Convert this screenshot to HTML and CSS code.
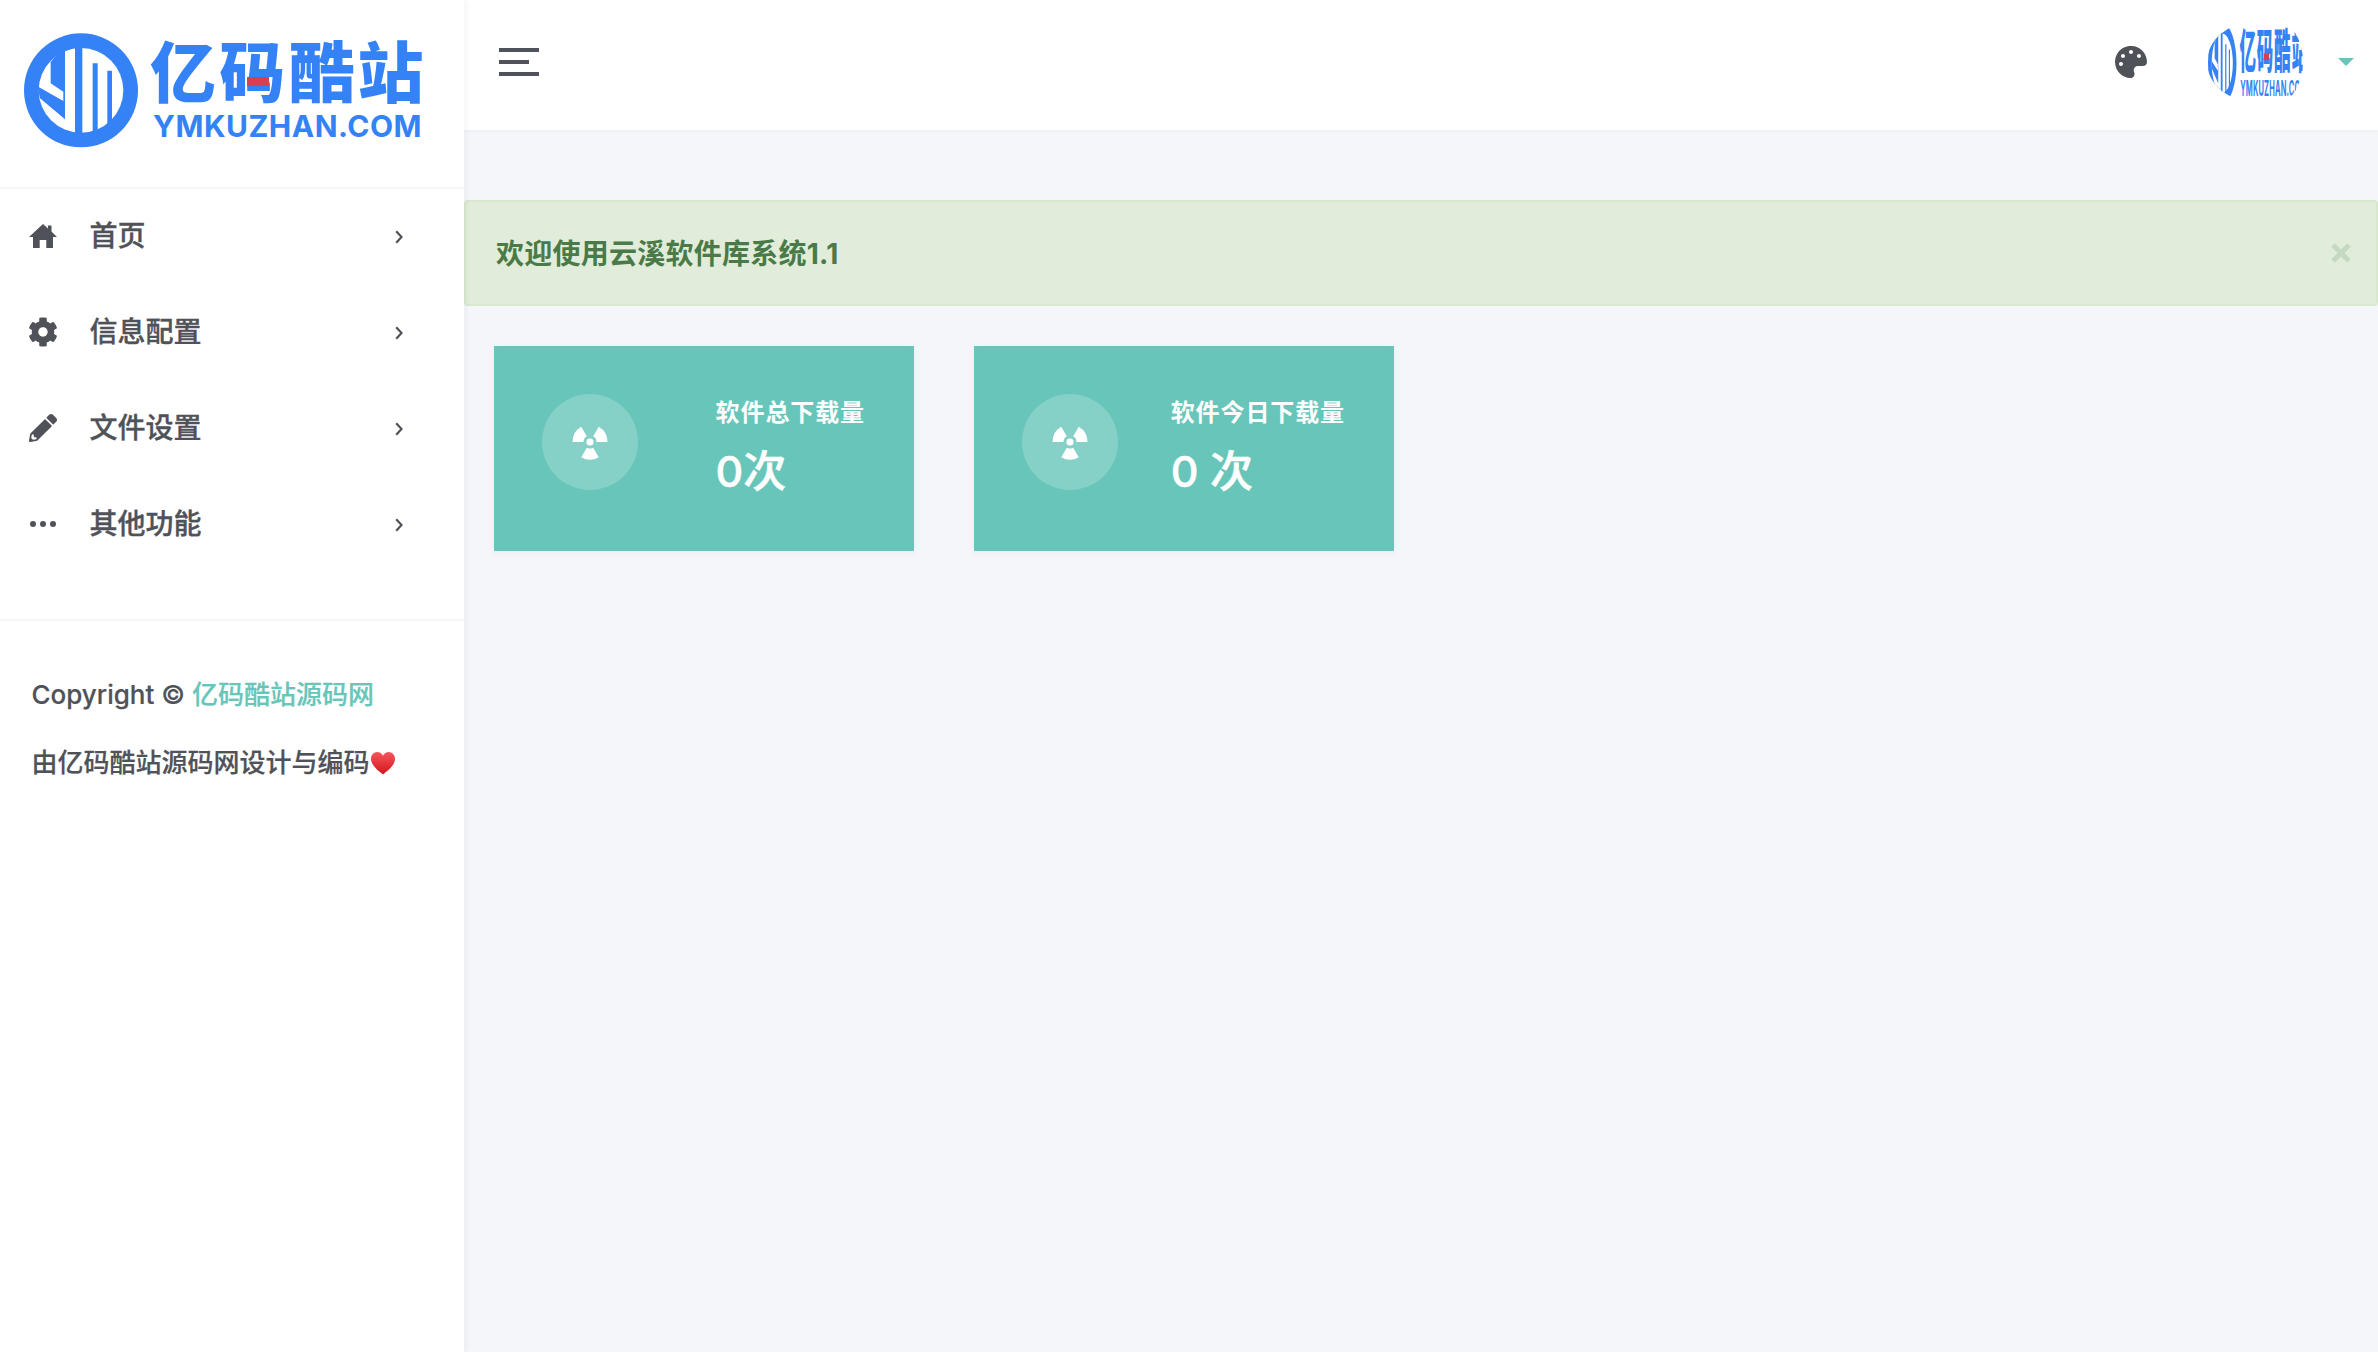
FILE: index.html
```html
<!DOCTYPE html>
<html lang="zh-CN">
<head>
<meta charset="utf-8">
<title>亿码酷站</title>
<link rel="stylesheet" href="styles.css">
</head>
<body>
<svg class="defs" width="0" height="0" aria-hidden="true">
  <defs>
    <linearGradient id="heart-fill" x1="0" y1="0" x2="0" y2="1">
      <stop offset="0" stop-color="#f4585c"/>
      <stop offset="1" stop-color="#d5141c"/>
    </linearGradient>
  </defs>
  <symbol id="logo-mark" viewBox="0 0 375 366">
    <circle cx="183" cy="181" r="171" fill="#3482f6"/>
    <circle cx="183" cy="181" r="127" fill="#fff"/>
    <path fill="#3482f6" d="M165 40h22v282h-22zM218 100h15v210h-15zM262 122h14v170h-14zM92 95l43-45v218L60 205l-8-36 78 44v-28l-38-25z"/>
  </symbol>
  <symbol id="radiation" viewBox="-18 -18 36 36">
    <circle r="3.6" fill="#fff"/>
    <path fill="#fff" d="M-3.25 5.63L-8.75 15.16A17.5 17.5 0 0 0 8.75 15.16L3.25 5.63A6.5 6.5 0 0 1-3.25 5.63Z"/>
    <path fill="#fff" transform="rotate(120)" d="M-3.25 5.63L-8.75 15.16A17.5 17.5 0 0 0 8.75 15.16L3.25 5.63A6.5 6.5 0 0 1-3.25 5.63Z"/>
    <path fill="#fff" transform="rotate(240)" d="M-3.25 5.63L-8.75 15.16A17.5 17.5 0 0 0 8.75 15.16L3.25 5.63A6.5 6.5 0 0 1-3.25 5.63Z"/>
  </symbol>
  <symbol id="chevron" viewBox="0 0 8 14">
    <path d="M1.2 1.2L6.6 7l-5.4 5.8" fill="none" stroke="currentColor" stroke-width="2.200"/>
  </symbol>
</svg>
<div class="app">
  <aside class="sidebar">
    <div class="brand">
      <div class="logo">
        <svg class="logo-mark"><use href="#logo-mark"/></svg>
        <div class="logo-text">
          <div class="logo-cn">亿<span class="logo-red">码</span>酷站</div>
          <div class="logo-en">YMKUZHAN.COM</div>
        </div>
      </div>
    </div>
    <nav class="nav">
      <a class="nav-item">
        <svg class="nav-icon" viewBox="0 0 28 28"><path d="M14 2L19 6.400V3.500h3.500v6L28 15h-4v11h-6.700v-8h-6.600v8H4V15H0z"/></svg>
        <span class="nav-label">首页</span>
        <svg class="nav-chevron"><use href="#chevron"/></svg>
      </a>
      <a class="nav-item">
        <svg class="nav-icon nav-icon-cog" viewBox="0 0 512 512"><path d="M487.4 315.7l-42.6-24.6c4.3-23.2 4.3-47 0-70.2l42.6-24.6c4.9-2.8 7.1-8.6 5.5-14-11.1-35.6-30-67.8-54.7-94.6-3.8-4.1-10-5.1-14.8-2.3L380.8 110c-17.9-15.4-38.5-27.3-60.8-35.1V25.8c0-5.6-3.9-10.5-9.4-11.7-36.7-8.2-74.3-7.8-109.2 0-5.5 1.2-9.4 6.1-9.4 11.7V75c-22.2 7.9-42.8 19.8-60.8 35.1L88.7 85.5c-4.9-2.8-11-1.9-14.8 2.3-24.7 26.7-43.6 58.9-54.7 94.6-1.7 5.4.6 11.2 5.5 14L67.3 221c-4.3 23.2-4.3 47 0 70.2l-42.6 24.6c-4.9 2.8-7.1 8.6-5.5 14 11.1 35.6 30 67.8 54.7 94.6 3.8 4.1 10 5.1 14.8 2.3l42.6-24.6c17.9 15.4 38.5 27.3 60.8 35.1v49.2c0 5.6 3.9 10.5 9.4 11.7 36.7 8.2 74.3 7.8 109.2 0 5.5-1.2 9.4-6.1 9.4-11.7v-49.2c22.2-7.9 42.8-19.8 60.8-35.1l42.6 24.6c4.9 2.8 11 1.9 14.8-2.3 24.7-26.7 43.6-58.9 54.7-94.6 1.5-5.5-.7-11.3-5.6-14.1zM256 336c-44.1 0-80-35.9-80-80s35.9-80 80-80 80 35.9 80 80-35.9 80-80 80z"/></svg>
        <span class="nav-label">信息配置</span>
        <svg class="nav-chevron"><use href="#chevron"/></svg>
      </a>
      <a class="nav-item">
        <svg class="nav-icon" viewBox="0 0 512 512"><path d="M497.9 142.1l-46.1 46.1c-4.7 4.7-12.3 4.7-17 0l-111-111c-4.7-4.7-4.7-12.3 0-17l46.1-46.1c18.7-18.7 49.1-18.7 67.9 0l60.1 60.1c18.8 18.7 18.8 49.1 0 67.9zM284.2 99.8L21.6 362.4.4 483.9c-2.9 16.4 11.4 30.6 27.8 27.8l121.5-21.3 262.6-262.600c4.7-4.7 4.7-12.3 0-17l-111-111c-4.8-4.7-12.4-4.7-17.1 0zM88 424h48v36.3l-64.5 11.3-31.1-31.1L51.7 376H88v48z"/></svg>
        <span class="nav-label">文件设置</span>
        <svg class="nav-chevron"><use href="#chevron"/></svg>
      </a>
      <a class="nav-item">
        <svg class="nav-icon" viewBox="0 0 28 28"><circle cx="4" cy="14" r="3"/><circle cx="14" cy="14" r="3"/><circle cx="24" cy="14" r="3"/></svg>
        <span class="nav-label">其他功能</span>
        <svg class="nav-chevron"><use href="#chevron"/></svg>
      </a>
    </nav>
    <footer class="side-footer">
      <p class="side-line">Copyright © <a class="side-link">亿码酷站源码网</a></p>
      <p class="side-line">由亿码酷站源码网设计与编码<svg class="heart" viewBox="0 0 26 24"><path fill="url(#heart-fill)" d="M13 23.500C9 20 1 14.600 1 7.800 1 3.800 4 1 7.300 1 9.800 1 12 2.400 13 4.800 14 2.400 16.200 1 18.700 1 22 1 25 3.800 25 7.800 25 14.600 17 20 13 23.500Z"/></svg></p>
    </footer>
  </aside>
  <div class="main">
    <header class="topbar">
      <div class="burger"><span class="burger-line"></span><span class="burger-line burger-short"></span><span class="burger-line"></span></div>
      <div class="top-right">
        <svg class="palette" viewBox="0 0 512 512"><path d="M204.3 5C104.9 24.4 24.8 104.3 5.2 203.4c-37 187 131.7 326.4 258.8 306.7 41.2-6.4 61.4-54.6 42.5-91.7-23.1-45.4 9.9-98.4 60.9-98.4h79.7c35.8 0 64.8-29.6 64.9-65.3C511.5 97.1 368.1-26.900 204.3 5zM96 320c-17.700 0-32-14.300-32-32s14.300-32 32-32 32 14.300 32 32-14.300 32-32 32zm32-128c-17.700 0-32-14.300-32-32s14.300-32 32-32 32 14.300 32 32-14.300 32-32 32zm128-64c-17.700 0-32-14.300-32-32s14.300-32 32-32 32 14.300 32 32-14.300 32-32 32zm128 64c-17.700 0-32-14.300-32-32s14.300-32 32-32 32 14.300 32 32-14.300 32-32 32z"/></svg>
        <div class="avatar">
          <div class="logo logo-small">
            <svg class="logo-mark"><use href="#logo-mark"/></svg>
            <div class="logo-text">
              <div class="logo-cn">亿<span class="logo-red">码</span>酷站</div>
              <div class="logo-en">YMKUZHAN.COM</div>
            </div>
          </div>
        </div>
        <span class="caret"></span>
      </div>
    </header>
    <main class="content">
      <div class="alert">
        <span class="alert-text">欢迎使用云溪软件库系统1.1</span>
        <svg class="alert-close" viewBox="0 0 22 22"><path d="M3 3l16 16M19 3L3 19" stroke="currentColor" stroke-width="5" fill="none"/></svg>
      </div>
      <div class="cards">
        <div class="card">
          <div class="card-icon"><svg class="card-glyph"><use href="#radiation"/></svg></div>
          <div class="card-body">
            <div class="card-title">软件总下载量</div>
            <div class="card-value">0次</div>
          </div>
        </div>
        <div class="card">
          <div class="card-icon"><svg class="card-glyph"><use href="#radiation"/></svg></div>
          <div class="card-body">
            <div class="card-title">软件今日下载量</div>
            <div class="card-value">0 次</div>
          </div>
        </div>
      </div>
    </main>
  </div>
</div>
</body>
</html>
```

FILE: styles.css
```css
* { box-sizing: border-box; }
html, body { margin: 0; height: 100%; overflow: hidden; }
body {
  font-family: Inter, "Noto Sans CJK SC", sans-serif;
  color: #4f5259;
  background: #f4f6fa;
}
.defs { position: absolute; }
.app { display: flex; height: 100vh; }

/* sidebar */
.sidebar {
  width: 464px;
  flex: none;
  background: #fff;
  box-shadow: 2px 0 6px rgba(40, 50, 90, .05);
  position: relative;
  z-index: 2;
}
.brand {
  height: 189px;
  border-bottom: 2px solid #f6f7fa;
  overflow: hidden;
}
.logo {
  display: flex;
  width: 464px;
  height: 188px;
  padding: 30px 0 0 20px;
}
.logo-mark { width: 125px; height: 122px; flex: none; }
.logo-text { margin: 5px 0 0 5px; color: #3482f6; }
.logo-cn {
  font-size: 66px;
  font-weight: 900;
  line-height: 76px;
  letter-spacing: 3.200px;
  white-space: nowrap;
}
.logo-red { position: relative; }
.logo-red::after {
  content: "";
  position: absolute;
  left: 28px;
  top: 44px;
  width: 22px;
  height: 9px;
  background: #d9404f;
}
.logo-en {
  font-size: 30px;
  font-weight: 700;
  line-height: 30px;
  letter-spacing: .5px;
  margin: 0 0 0 3px;
  white-space: nowrap;
}
.nav { height: 432px; border-bottom: 2px solid #f4f5f8; }
.nav-item {
  display: flex;
  align-items: center;
  height: 96px;
  padding-left: 29px;
}
.nav-icon { width: 28px; height: 28px; margin-top: -3px; fill: #4f5259; flex: none; }
.nav-icon-cog { width: 30px; height: 30px; margin: -3px -1px 0; }
.nav-label {
  margin: -6px 0 0 32.500px;
  font-size: 28px;
  font-weight: 500;
  -webkit-text-stroke: .35px #4f5259;
  width: 305px;
}
.nav-chevron { width: 8px; height: 14px; color: #4f5259; }
.side-footer { padding: 53.500px 0 0 31.500px; }
.side-line {
  margin: 0 0 28px;
  display: flex;
  align-items: center;
  font-size: 26px;
  line-height: 40px;
  font-weight: 500;
  -webkit-text-stroke: .2px currentColor;
  white-space: pre;
}
.side-link { color: #67c6b9; }
.heart { width: 26px; height: 24px; flex: none; }

/* header */
.main { flex: 1; min-width: 0; }
.topbar {
  height: 130px;
  background: #fff;
  box-shadow: 0 1px 4px rgba(40, 50, 90, .04);
  display: flex;
  justify-content: space-between;
  padding: 0 24px 0 35px;
}
.burger { display: flex; flex-direction: column; gap: 8px; padding-top: 48px; }
.burger-line { display: block; width: 40px; height: 4px; background: #4f5259; }
.burger-short { width: 30px; }
.top-right { display: flex; align-items: flex-start; }
.palette { width: 32px; height: 32px; fill: #4f5259; margin-top: 46px; }
.avatar {
  width: 96px;
  height: 80px;
  margin: 22px 0 0 60px;
  border-radius: 50% 26% 26% 50% / 50%;
  overflow: hidden;
}
.logo-small {
  transform-origin: 0 0;
  transform: translate(-5px, -22px) scale(.25, .7);
}
.caret {
  margin: 58px 0 0 35px;
  border-top: 8px solid #67c6b9;
  border-left: 8px solid transparent;
  border-right: 8px solid transparent;
}

/* content */
.content { padding-top: 70px; }
.alert {
  height: 106px;
  display: flex;
  align-items: center;
  justify-content: space-between;
  padding: 0 24px 0 30px;
  background: #e1edda;
  border: 2px solid #d8e8cc;
  border-radius: 4px;
}
.alert-text { font-size: 28px; font-weight: 700; letter-spacing: .25px; color: #4a7a47; margin-top: -3px; }
.alert-close { width: 22px; height: 22px; color: #c4d9c2; }
.cards { display: flex; gap: 60px; padding: 40px 0 0 30px; }
.card {
  width: 420px;
  height: 205px;
  padding: 48px 49px 0 48px;
  display: flex;
  justify-content: space-between;
  background: #67c6b9;
  color: #fff;
  box-shadow: 0 2px 8px rgba(40, 50, 90, .04);
}
.card-icon {
  width: 96px;
  height: 96px;
  border-radius: 50%;
  background: rgba(255, 255, 255, .2);
  display: flex;
  align-items: center;
  justify-content: center;
}
.card-glyph { width: 36px; height: 36px; }
.card-body { margin-top: 1px; }
.card-title { font-size: 24px; letter-spacing: .9px; font-weight: 700; line-height: 36px; white-space: nowrap; }
.card-value {
  font-size: 43px;
  font-weight: 500;
  -webkit-text-stroke: .5px #fff;
  line-height: 56px;
  margin-top: 12px;
  white-space: nowrap;
}
```
